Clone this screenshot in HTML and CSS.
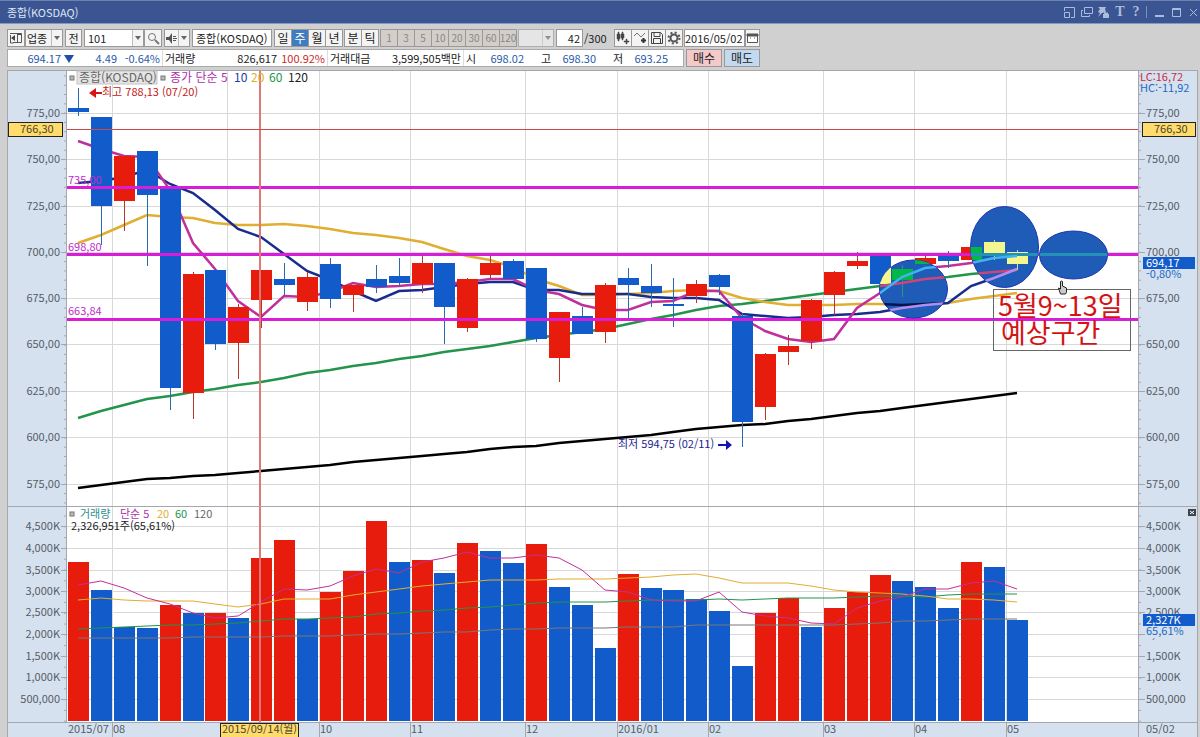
FILE: index.html
```html
<!DOCTYPE html>
<html lang="ko">
<head>
  <meta charset="UTF-8" />
  <meta name="viewport" content="width=device-width, initial-scale=1.0" />
  <title>종합(KOSDAQ)</title>
  <link rel="stylesheet" href="styles.css">
</head>
<body>

  <header class="titlebar">
    <h1>종합(KOSDAQ)</h1>
    <div class="window-buttons">
      <button type="button" aria-label="크기"><svg width="13" height="13" viewBox="0 0 13 13"><path d="M1.500 5V1.500h10v10H8M1.500 6.500h5v5h-5z"/></svg></button>
      <button type="button" aria-label="복사"><svg width="13" height="13" viewBox="0 0 13 13"><path d="M4.500 1.500h8v6h-8zM3 4.500H1.500v6h8V9"/></svg></button>
      <button type="button" aria-label="고정"><svg width="13" height="13" viewBox="0 0 13 13"><path class="solid" d="M1 1h8L8 3l1 3-4 1-4 4 2-4-2-1 2-3zM6 8h1V6.500h4V8h1v4H6z"/></svg></button>
      <button type="button" class="letter" aria-label="글꼴">T</button>
      <button type="button" class="letter" aria-label="도움말">?</button>
      <span class="bar"></span>
      <button type="button" aria-label="최소화"><svg width="13" height="13" viewBox="0 0 13 13"><path class="solid" d="M2 9h9v2H2z"/></svg></button>
      <button type="button" aria-label="최대화"><svg width="13" height="13" viewBox="0 0 13 13"><path d="M2.500 2.500h8v8h-8zM2 3.500h9"/></svg></button>
      <button type="button" aria-label="닫기"><svg width="13" height="13" viewBox="0 0 13 13"><path d="M3 3l7 7M10 3l-7 7"/></svg></button>
    </div>
  </header>

  <form class="toolbar">
    <button type="button" class="icon" aria-label="패널"><svg width="14" height="14" viewBox="0 0 14 14"><path d="M4 2.500h8.500v9H4M1.500 4v8h3M8.500 2v9M1 2.500h4" fill="none" stroke="#555"/><path d="M2 7l4-3v6zM9 3h3v1H9z" fill="#444"/></svg></button>
    <div class="dropdown market">
      <select aria-label="구분"><option>업종</option></select>
    </div>
    <button type="button" class="prev">전</button>
    <div class="dropdown code">
      <input type="text" value="101" aria-label="코드">
    </div>
    <button type="button" class="icon" aria-label="검색"><svg width="13" height="13" viewBox="0 0 13 13"><circle cx="5" cy="5" r="3.500" fill="none" stroke="#777"/><path d="M8 8l4 4" stroke="#777" stroke-width="2"/></svg></button>
    <div class="dropdown sound">
      <button type="button" aria-label="소리"><svg width="13" height="13" viewBox="0 0 13 13"><path d="M1 5h3l3-4v11L4 8H1zM8 4h3v1H8zM8 6h4v1H8zM8 8h3v1H8z" fill="#555"/></svg></button>
    </div>
    <input type="text" class="name" value="종합(KOSDAQ)" aria-label="종목명">
    <div class="group">
      <button type="button">일</button><button type="button" class="selected">주</button><button type="button">월</button><button type="button">년</button>
    </div>
    <div class="group">
      <button type="button">분</button><button type="button">틱</button>
    </div>
    <div class="group minutes">
      <button type="button">1</button><button type="button">3</button><button type="button">5</button><button type="button">10</button><button type="button">20</button><button type="button">30</button><button type="button">60</button><button type="button">120</button>
      <div class="dropdown disabled"><select disabled aria-label="분 단위"><option></option></select></div>
    </div>
    <div class="count"><input type="text" value="42" aria-label="개수"><span>/300</span></div>
    <div class="group tools">
      <button type="button" aria-label="봉 추가"><svg width="14" height="14" viewBox="0 0 14 14"><path d="M1 3h3v5H1zM2 1h1v9H2zM5 3h3v4H5zM6 1h1v8H6zM8 10h5v1H8zM10 8h1v5h-1z" fill="#444" stroke="#444" stroke-width=".5"/></svg></button>
      <button type="button" aria-label="지표 추가"><svg width="14" height="14" viewBox="0 0 14 14"><path d="M1 5l3-3 4 4 4-4" fill="none" stroke="#777"/><path d="M8 9.500h5M10.500 7v5" stroke="#333" stroke-width="2"/></svg></button>
      <button type="button" aria-label="저장"><svg width="14" height="14" viewBox="0 0 14 14"><path d="M1.500 1.500h9l2 2v9h-11zM4 1.500v4h6v-4M3.500 12.500v-5h7v5" fill="none" stroke="#444"/></svg></button>
      <button type="button" aria-label="설정"><svg width="14" height="14" viewBox="0 0 14 14"><circle cx="7" cy="7" r="3.500" fill="none" stroke="#555" stroke-width="2"/><circle cx="7" cy="7" r="5.500" fill="none" stroke="#555" stroke-width="2" stroke-dasharray="2 2.320"/></svg></button>
    </div>
    <div class="date"><input type="text" value="2016/05/02" aria-label="날짜"><button type="button" aria-label="달력"><svg width="13" height="13" viewBox="0 0 13 13"><path d="M1.500 2.500h10v8h-10z" fill="#fff" stroke="#555"/><path d="M1 2h11v2H1zM4 6h1M8 6h1" fill="#555" stroke="#555"/></svg></button></div>
  </form>

  <div class="quote">
    <div class="quote-values">
      <span class="down price">694.17<i class="triangle"></i></span>
      <span class="down change">4.49</span>
      <span class="down rate">-0.64%</span>
      <span class="label volume">거래량</span>
      <span class="volume-value">826,617</span>
      <span class="up volume-rate">100.92%</span>
      <span class="label amount">거래대금</span>
      <span class="amount-value">3,599,505백만</span>
      <span class="label open">시</span>
      <span class="down ohlc">698.02</span>
      <span class="ohlc-label">고</span>
      <span class="down ohlc">698.30</span>
      <span class="ohlc-label">저</span>
      <span class="down ohlc">693.25</span>
    </div>
    <button type="button" class="buy">매수</button>
    <button type="button" class="sell">매도</button>
  </div>

  <svg class="chart" id="chart" viewBox="0 70 1200 667" role="img" aria-label="종합(KOSDAQ) 주봉 차트">
    <defs>
      <clipPath id="spots">
        <ellipse cx="913.500" cy="289" rx="34" ry="29"/>
        <ellipse cx="1004.500" cy="247" rx="34" ry="40.500"/>
        <ellipse cx="1073.500" cy="255" rx="34" ry="24"/>
      </clipPath>
    </defs>
    <rect class="axis-bg" x="7" y="70" width="1191" height="667"/>
    <rect class="plot-bg" x="67" y="70" width="1071" height="652"/>
    <g id="grid"></g>
    <g id="volume"></g>
    <g id="price"></g>
    <g class="spots">
      <ellipse cx="913.500" cy="289" rx="34" ry="29"/>
      <ellipse cx="1004.500" cy="247" rx="34" ry="40.500"/>
      <ellipse cx="1073.500" cy="255" rx="34" ry="24"/>
    </g>
    <g id="inverted" clip-path="url(#spots)"></g>
    <path class="cross" d="M260 70V722"/>
    <rect class="cross-price" x="67" y="129" width="1071" height="1"/>
    <path class="frame" d="M7.500 70V737M66.500 70V722M1138.500 70V737M1197.500 70V737M7 70.500H1198M7 506.500H1198M7 722.500H1198"/>
    <g id="axis"></g>

    <g class="legend">
      <rect class="marker" x="70" y="76" width="4" height="4"/>
      <rect class="legend-box" x="77" y="71" width="80" height="13"/>
      <text class="gray" x="79" y="82">종합(KOSDAQ)</text>
      <rect class="marker" x="161" y="76" width="4" height="4"/>
      <text class="ma5" x="170" y="82">종가 단순 5</text>
      <text class="ma10" x="234" y="82">10</text>
      <text class="ma20" x="251" y="82">20</text>
      <text class="ma60" x="269" y="82">60</text>
      <text x="288" y="82">120</text>
    </g>

    <g class="legend small">
      <rect class="marker" x="70" y="512" width="4" height="4"/>
      <text class="teal" x="80" y="518">거래량</text>
      <text class="ma5" x="120" y="518">단순 5</text>
      <text class="ma20" x="157" y="518">20</text>
      <text class="ma60" x="175" y="518">60</text>
      <text class="gray" x="194" y="518">120</text>
      <text x="71" y="530">2,326,951주(65,61%)</text>
    </g>

    <path class="high-arrow" d="M89 93l7-5v4h6v2h-6v4z"/>
    <text class="high" x="102" y="96">최고 788,13 (07/20)</text>
    <path class="low-arrow" d="M732 445l-6-5v4h-8v2h8v4z"/>
    <text class="low" x="618" y="448">최저 594,75 (02/11)</text>

    <text class="level-text" x="68" y="184">735,00</text>
    <text class="level-text" x="68" y="251">698,80</text>
    <text class="level-text" x="68" y="315">663,84</text>

    <g class="note">
      <rect x="993.500" y="289.500" width="137" height="61"/>
      <text x="998" y="316">5월9~13일</text>
      <text x="1001" y="343">예상구간</text>
    </g>
    <path class="pointer" d="M1060.500 281.500q1.500-1 2 0V286l4 2v4l-1 2h-5l-1-3-1-3 2 1z"/>

    <g class="tags">
      <rect class="tag" x="8.500" y="122.500" width="54" height="14"/>
      <text x="20" y="133">766,30</text>
      <rect class="tag" x="1142.500" y="122.500" width="53" height="14"/>
      <text x="1154" y="133">766,30</text>
      <rect class="tag" x="220.500" y="723.500" width="78" height="14"/>
      <text x="222" y="733">2015/09/14(월)</text>
      <rect class="now" x="1143" y="257" width="52" height="12"/>
      <text class="now-text" x="1146" y="267">694,17</text>
      <text class="rate-text" x="1146" y="278">-0,80%</text>
      <rect class="axis-bg" x="1146" y="627" width="49" height="11"/>
      <rect class="now" x="1143" y="614" width="52" height="12"/>
      <text class="now-text" x="1146" y="624">2,327K</text>
      <text class="rate-text" x="1146" y="635">65,61%</text>
      <text class="lc" x="1140" y="81">LC:16,72</text>
      <text class="rate-text" x="1140" y="92">HC:-11,92</text>
      <rect class="close-box" x="1188" y="509" width="8" height="7"/>
      <path class="close-x" d="M1190 511l4 3M1194 511l-4 3"/>
    </g>
  </svg>

  <script>
    // direction, high, body top, body bottom, low, volume top
    const weeks = [
      ["d", 88, 108, 112, 116, 562], ["d", 117, 117, 206, 245, 590], ["u", 156, 156, 201, 231, 627],
      ["d", 151, 151, 195, 266, 628], ["d", 188, 188, 388, 410, 605], ["u", 272, 274, 393, 419, 613],
      ["d", 269, 270, 344, 350, 613], ["u", 304, 307, 343, 379, 618], ["u", 270, 270, 300, 328, 558],
      ["d", 263, 279, 285, 295, 540], ["u", 272, 277, 302, 311, 619], ["d", 258, 264, 299, 308, 592],
      ["u", 285, 285, 295, 312, 571], ["d", 265, 279, 287, 293, 521], ["d", 258, 276, 283, 286, 562],
      ["u", 256, 263, 284, 293, 560], ["d", 263, 263, 307, 344, 573], ["u", 278, 279, 328, 332, 543],
      ["u", 256, 263, 275, 278, 551], ["d", 259, 261, 279, 279, 563], ["d", 268, 268, 339, 342, 544],
      ["u", 312, 312, 358, 382, 587], ["d", 307, 316, 334, 334, 605], ["u", 283, 285, 332, 343, 648],
      ["d", 268, 278, 285, 320, 574], ["d", 264, 286, 293, 307, 588], ["d", 278, 304, 306, 327, 590],
      ["u", 280, 284, 296, 303, 599], ["d", 274, 275, 287, 295, 611], ["d", 313, 316, 422, 447, 666],
      ["u", 353, 354, 407, 420, 613], ["u", 335, 346, 352, 365, 598], ["u", 299, 300, 341, 349, 627],
      ["u", 271, 272, 295, 315, 608], ["u", 252, 261, 266, 269, 592], ["d", 255, 255, 284, 284, 575],
      ["u", 265, 269, 280, 297, 581], ["u", 256, 258, 264, 264, 587], ["d", 251, 253, 261, 268, 608],
      ["u", 247, 247, 260, 260, 562], ["d", 240, 242, 253, 260, 567], ["d", 250, 252, 264, 270, 620]
    ];
    const volumeUp = [0, 4, 6, 8, 9, 11, 12, 13, 15, 17, 20, 24, 30, 31, 33, 34, 35, 39];

    const priceLines = {
      ma120: [488, 485, 482, 479, 478, 476, 475, 473, 471, 469, 467, 465, 462, 460, 458, 456, 454, 452, 449, 447, 446, 443, 441, 439, 437, 435, 432, 429, 427, 425, 424, 421, 419, 416, 413, 411, 408, 405, 402, 399, 396, 393],
      ma60: [418, 411, 405, 399, 396, 392, 389, 385, 382, 378, 373, 370, 366, 363, 359, 356, 352, 349, 346, 342, 338, 335, 332, 329, 324, 319, 315, 310, 306, 304, 301, 298, 295, 292, 289, 286, 283, 279, 277, 274, 272, 270],
      ma20: [243, 235, 225, 215, 217, 218, 223, 225, 225, 224, 226, 229, 233, 235, 238, 242, 249, 256, 260, 267, 279, 286, 295, 295, 294, 293, 291, 290, 291, 298, 302, 305, 305, 305, 304, 304, 305, 304, 303, 299, 296, 293],
      ma10: [183, 181, 177, 170, 184, 193, 210, 229, 237, 254, 271, 280, 291, 301, 291, 290, 287, 284, 282, 282, 290, 290, 294, 294, 294, 297, 298, 298, 300, 314, 316, 318, 317, 315, 314, 312, 308, 305, 303, 286, 278, 269],
      ma5: [141, 149, 156, 157, 190, 243, 269, 301, 317, 296, 297, 292, 283, 287, 286, 284, 284, 282, 279, 279, 290, 294, 305, 310, 310, 302, 301, 291, 291, 318, 331, 339, 342, 339, 308, 293, 277, 268, 266, 263, 258, 256]
    };
    const volumeLines = {
      ma120: [638, 638, 638, 638, 638, 637, 637, 637, 637, 636, 636, 636, 635, 634, 634, 633, 632, 632, 630, 629, 629, 628, 628, 628, 627, 627, 627, 625, 625, 625, 625, 625, 625, 625, 624, 623, 621, 621, 620, 619, 619, 619],
      ma60: [629, 628, 627, 626, 625, 625, 624, 623, 621, 619, 619, 618, 617, 614, 613, 611, 610, 608, 607, 605, 603, 602, 602, 602, 601, 600, 600, 600, 599, 600, 599, 598, 598, 598, 597, 596, 596, 597, 595, 594, 594, 594],
      ma20: [600, 598, 600, 601, 601, 601, 604, 607, 604, 599, 599, 599, 595, 592, 589, 586, 584, 582, 580, 580, 580, 579, 579, 579, 578, 577, 575, 574, 578, 583, 583, 583, 586, 590, 592, 593, 594, 596, 599, 599, 600, 602],
      ma5: [585, 581, 588, 598, 604, 613, 618, 616, 602, 589, 590, 586, 576, 569, 573, 562, 558, 552, 558, 558, 555, 558, 570, 590, 592, 600, 601, 601, 592, 612, 616, 618, 623, 624, 608, 601, 597, 589, 589, 583, 581, 589]
    };

    const months = [[67, "2015/07"], [112, "08"], [227, ""], [319, "10"], [410, "11"], [525, "12"], [617, "2016/01"], [708, "02"], [823, "03"], [914, "04"], [1006, "05"]];
    const prices = [[113, "775,00"], [159, "750,00"], [206, "725,00"], [252, "700,00"], [298, "675,00"], [344, "650,00"], [391, "625,00"], [437, "600,00"], [484, "575,00"]];
    const volumes = [[526, "4,500K"], [548, "4,000K"], [570, "3,500K"], [591, "3,000K"], [612, "2,500K"], [634, "2,000K"], [656, "1,500K"], [677, "1,000K"], [699, "500,000"]];

    function add(parent, tag, attrs, text) {
      const el = document.createElementNS("http://www.w3.org/2000/svg", tag);
      for (const key in attrs) el.setAttribute(key, attrs[key]);
      if (text) el.textContent = text;
      parent.appendChild(el);
    }

    function centre(i) {
      return Math.round(78 + i * 22.9);
    }

    function drawLines(parent, lines) {
      for (const name in lines) {
        const points = lines[name].map((y, i) => centre(i) + "," + y).join(" ");
        add(parent, "polyline", { class: "line " + name, points: points });
      }
    }

    function drawCandles(parent) {
      weeks.forEach(([dir, high, top, bottom, low], i) => {
        const x = centre(i);
        add(parent, "path", { class: "wick " + dir, d: `M${x + 0.5} ${high}V${low}` });
        add(parent, "rect", { class: dir, x: x - 10, y: top, width: 21, height: bottom - top });
      });
    }

    function drawLevels(parent) {
      add(parent, "path", { class: "level", d: "M67 187.5H1138M67 254.5H1138M67 319.5H1138" });
    }

    const grid = document.getElementById("grid");
    const axis = document.getElementById("axis");
    const volume = document.getElementById("volume");
    const price = document.getElementById("price");
    const inverted = document.getElementById("inverted");

    months.forEach(([x, label], i) => {
      if (i) add(grid, "path", { class: "grid", d: `M${x + 0.5} 70V722` });
      if (i) add(axis, "path", { class: "tick", d: `M${x + 0.5} 722V737` });
      if (label) add(axis, "text", { x: x + 1, y: 733 }, label);
    });
    add(axis, "text", { x: 1146, y: 733 }, "05/02");

    prices.concat(volumes).forEach(([y, label]) => {
      add(grid, "path", { class: "grid", d: `M67 ${y + 0.5}H1138` });
      add(axis, "path", { class: "tick", d: `M61 ${y + 0.5}H67M1138 ${y + 0.5}H1145` });
      add(axis, "text", { x: 60, y: y + 4, "text-anchor": "end" }, label);
      add(axis, "text", { x: 1146, y: y + 4 }, label);
    });
    for (let y = 76; y < 505; y += 9.28) add(axis, "path", { class: "tick", d: `M64 ${y}H67M1138 ${y}H1141` });
    for (let y = 516; y < 722; y += 10.8) add(axis, "path", { class: "tick", d: `M64 ${y}H67M1138 ${y}H1141` });

    weeks.forEach((week, i) => {
      const top = week[5];
      add(volume, "rect", { class: volumeUp.includes(i) ? "u" : "d", x: centre(i) - 10, y: top, width: 21, height: 721 - top });
    });
    drawLines(volume, volumeLines);

    drawLines(price, priceLines);
    drawCandles(price);
    drawLevels(price);

    drawCandles(inverted);
    drawLevels(inverted);
    drawLines(inverted, priceLines);
  </script>

</body>
</html>
```
FILE: styles.css
```css
* {
  box-sizing: border-box;
}

body {
  margin: 0;
  background-color: #d0d0d0;
  font-family: "Noto Sans CJK KR", sans-serif;
  font-size: 11px;
  color: #222;
}

button, input, select {
  height: 18px;
  margin: 0;
  padding: 0;
  border: 1px solid #999;
  border-radius: 0;
  background-color: #f4f4f4;
  font-family: inherit;
  font-size: 11px;
  line-height: 16px;
  color: #222;
}

button {
  display: flex;
  align-items: center;
  justify-content: center;
  flex-shrink: 0;
}

input {
  padding: 0 3px;
  background-color: #fff;
}

select {
  appearance: none;
}

.titlebar {
  display: flex;
  align-items: center;
  justify-content: space-between;
  height: 24px;
  padding: 0 0 0 7px;
  border-top: 1px solid #6d82b0;
  border-bottom: 1px solid #8498c2;
  background-color: #3a5591;
  color: #dfe6f4;
}

.titlebar h1 {
  margin: 0;
  font-size: 11px;
  font-weight: normal;
}

.window-buttons {
  display: flex;
  align-items: center;
  gap: 4px;
}

.window-buttons button {
  width: 13px;
  border: none;
  background: none;
  color: #aebcdb;
}

.window-buttons path {
  fill: none;
  stroke: #aebcdb;
}

.window-buttons .solid {
  fill: #aebcdb;
  stroke: none;
}

.window-buttons .letter {
  width: 12px;
  font-family: "Liberation Serif", serif;
  font-size: 14px;
  font-weight: bold;
}

.window-buttons .bar {
  width: 1px;
  height: 12px;
  margin-right: 2px;
  background-color: #7d90bb;
}

.toolbar {
  display: flex;
  align-items: center;
  gap: 2px;
  height: 25px;
  padding: 3px 7px 0;
}

.toolbar > * {
  flex-shrink: 0;
}

.toolbar .icon {
  width: 18px;
}

.dropdown {
  display: flex;
  align-items: center;
  height: 18px;
  border: 1px solid #999;
  background-color: #f4f4f4;
}

.dropdown select, .dropdown input, .dropdown button {
  flex: 1;
  width: 0;
  height: 16px;
  border: none;
  border-right: 1px solid #bbb;
}

.dropdown::after {
  content: "";
  margin: 0 2px;
  border: 3px solid transparent;
  border-top: 4px solid #666;
  border-bottom: none;
}

.market {
  width: 38px;
  margin-left: -2px;
}

.market select {
  padding-left: 1px;
}

.toolbar .prev {
  width: 17px;
}

.code {
  width: 60px;
}

.code + .icon {
  margin-left: -2px;
}

.sound {
  width: 26px;
}

.toolbar .name {
  width: 80px;
}

.group, .count, .date {
  display: flex;
}

.group button {
  width: 18px;
  margin-right: -1px;
  font-size: 12px;
}

.group .selected {
  background-color: #3f7cc0;
  color: #fff;
}

.minutes button {
  background-color: #d3cec8;
  font-size: 10px;
  color: #888;
}

.disabled {
  width: 36px;
  margin-left: 2px;
  opacity: 0.6;
}

.count span {
  width: 29px;
  padding-left: 1px;
  line-height: 18px;
}

.count input {
  width: 27px;
  text-align: right;
  padding: 0 2px;
}

.date input {
  width: 61px;
  padding: 0;
}

.date button {
  width: 15px;
}

.quote {
  display: flex;
  gap: 2px;
  height: 21px;
  padding: 0 7px 3px;
}

.quote-values {
  display: flex;
  width: 677px;
  height: 18px;
  border: 1px solid #aaa;
  background-color: #fff;
  line-height: 16px;
  text-align: right;
  white-space: nowrap;
}

.quote-values span {
  flex-shrink: 0;
}

.quote-values .label {
  padding-left: 2px;
  border-left: 1px solid #ddd;
  text-align: left;
}

.down {
  color: #2a5aa8;
}

.up {
  color: #cc2a2a;
}

.triangle {
  display: inline-block;
  margin-left: 3px;
  border: 5px solid transparent;
  border-top: 8px solid #1f4fa8;
  border-bottom: none;
}

.price {
  width: 66px;
}

.change {
  width: 43px;
}

.rate {
  width: 43px;
}

.volume {
  width: 45px;
  margin-left: 2px;
}

.volume-value {
  width: 70px;
}

.volume-rate {
  width: 48px;
}

.amount {
  width: 52px;
  margin-left: 2px;
}

.amount-value {
  width: 82px;
}

.open {
  width: 16px;
  margin-left: 2px;
}

.ohlc {
  width: 45px;
}

.ohlc-label {
  width: 27px;
}

.quote button {
  width: 36px;
  font-size: 12px;
}

.quote .buy {
  background-color: #f3c9c9;
}

.quote .sell {
  background-color: #c3d9ef;
}

.chart {
  display: block;
  width: 100%;
  height: auto;
  overflow: visible;
}

.chart text {
  font-size: 11px;
  fill: #222;
}

.axis-bg {
  fill: #d6e1ef;
}

.plot-bg {
  fill: #fff;
}

.grid {
  stroke: #d8d8d8;
}

.frame, .tick {
  fill: none;
  stroke: #a4a8ae;
}

#axis text {
  fill: #555c66;
}

.u {
  fill: #e81c0c;
}

.d {
  fill: #125bcb;
}

.wick.u {
  stroke: #b8352a;
}

.wick.d {
  stroke: #2a6ab0;
}

.line {
  fill: none;
  stroke-width: 1;
}

#price .line, #inverted .line {
  stroke-width: 2.5;
}

.line.ma5 {
  stroke: #c0309c;
}

.line.ma10 {
  stroke: #182c8c;
}

.line.ma20 {
  stroke: #e0ae30;
}

.line.ma60 {
  stroke: #22954a;
}

.line.ma120 {
  stroke: #777;
}

#price .ma120 {
  stroke: #000;
}

.level {
  fill: none;
  stroke: #d81cd8;
  stroke-width: 3;
}

.cross {
  fill: none;
  stroke: #e07874;
  stroke-width: 2;
}

.cross-price {
  fill: #cc4a4a;
}

.spots ellipse {
  fill: #1e5cb8;
  stroke: #1c34b0;
}

#inverted .u {
  fill: #00b848;
}

#inverted .d {
  fill: #f4f78e;
}

#inverted .wick.u {
  stroke: #2b9a70;
}

#inverted .wick.d {
  stroke: #d8dc90;
}

#inverted .level {
  stroke: #2492b4;
}

#inverted .ma5 {
  stroke: #40b4f0;
}

#inverted .ma10 {
  stroke: #b48cec;
}

#inverted .ma20 {
  stroke: #04144c;
}

#inverted .ma60 {
  stroke: #cc447c;
}

.marker {
  fill: #bbb;
  stroke: #777;
}

.legend-box {
  fill: #e4e4e4;
  stroke: #c4c4c4;
}

.chart .legend text {
  font-size: 12px;
}

.chart .small text {
  font-size: 11px;
}

.legend .gray {
  fill: #666;
}

.legend .teal {
  fill: #2a8f8c;
}

.legend .ma5 {
  fill: #b030a8;
}

.legend .ma10 {
  fill: #1c3c9c;
}

.legend .ma20 {
  fill: #dcb030;
}

.legend .ma60 {
  fill: #1e9448;
}

.high-arrow {
  fill: #d81414;
}

.chart .high {
  fill: #c42020;
}

.low-arrow {
  fill: #1414b4;
}

.chart .low {
  fill: #1c1c94;
}

.chart .level-text {
  fill: #c02cc8;
}

.note rect {
  fill: none;
  stroke: #666;
}

.chart .note text {
  font-size: 27px;
  fill: #d41414;
}

.pointer {
  fill: #ccc;
  stroke: #222;
}

.tag {
  fill: #ffdc6c;
  stroke: #222;
}

.tags text {
  fill: #4c4430;
}

.now {
  fill: #125bcb;
}

.tags .now-text {
  fill: #fff;
}

.tags .rate-text {
  fill: #2468c4;
}

.tags .lc {
  fill: #cc2a3a;
}

.close-box {
  fill: #3c4450;
}

.close-x {
  stroke: #fff;
}
```
